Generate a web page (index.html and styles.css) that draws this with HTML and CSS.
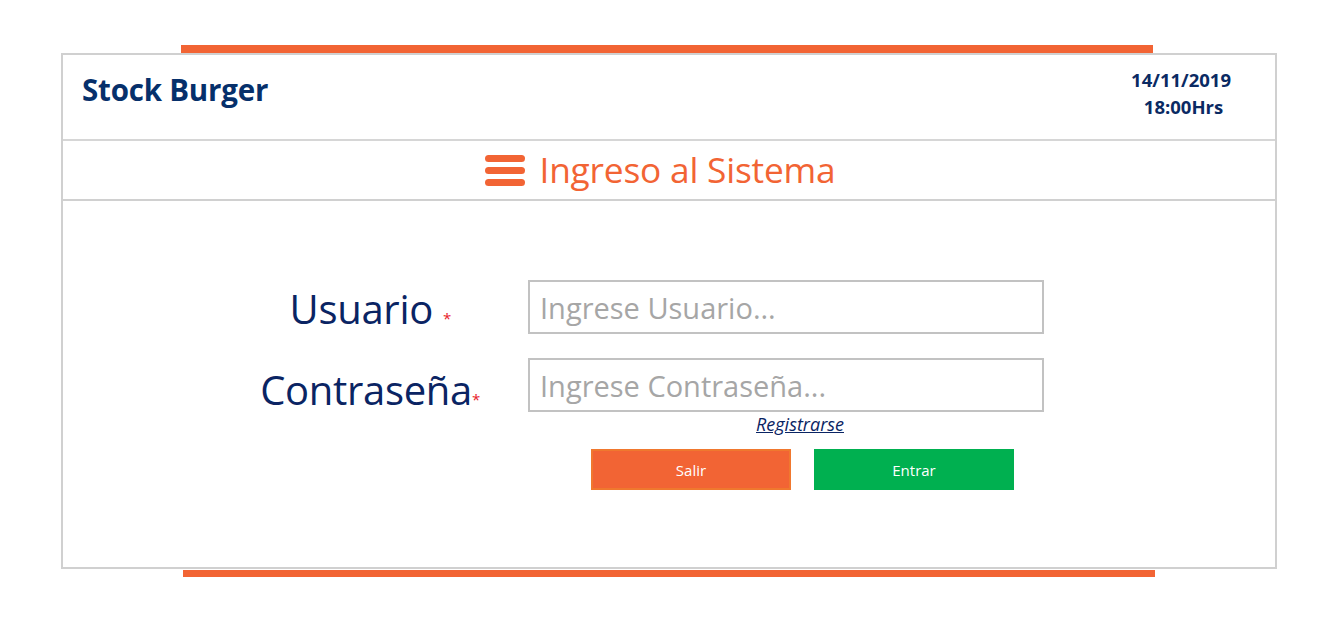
FILE: index.html
```html
<!DOCTYPE html>
<html lang="es">
<head>
<meta charset="utf-8">
<title>Stock Burger</title>
<link rel="stylesheet" href="styles.css">
</head>
<body>
<div class="page">
  <div class="bar bar-top"></div>
  <div class="card">
    <header class="header">
      <div class="brand">Stock Burger</div>
      <div class="datetime">
        <div class="date">14/11/2019</div>
        <div class="time">18:00Hrs</div>
      </div>
    </header>
    <div class="titlebar">
      <svg class="menu-icon" width="40" height="32" viewBox="0 0 40 32">
        <rect x="0" y="0" width="40" height="7" rx="3.5" fill="#f26434"/>
        <rect x="0" y="12" width="40" height="7" rx="3.5" fill="#f26434"/>
        <rect x="0" y="24" width="40" height="7" rx="3.5" fill="#f26434"/>
      </svg>
      <h1 class="title">Ingreso al Sistema</h1>
    </div>
    <main class="content">
      <form class="login">
        <div class="grid">
          <label class="label label-user" for="user">Usuario <span class="req">*</span></label>
          <input class="field" id="user" type="text" placeholder="Ingrese Usuario...">
          <label class="label label-pass" for="pass">Contraseña<span class="req">*</span></label>
          <input class="field" id="pass" type="password" placeholder="Ingrese Contraseña...">
        </div>
        <div class="below">
          <div class="register"><a href="#">Registrarse</a></div>
          <div class="actions">
            <button type="button" class="btn btn-exit">Salir</button>
            <button type="submit" class="btn btn-enter">Entrar</button>
          </div>
        </div>
      </form>
    </main>
  </div>
  <div class="bar bar-bottom"></div>
</div>
</body>
</html>
```

FILE: styles.css
```css
* { box-sizing: border-box; }
html, body { margin: 0; padding: 0; background: #fff; }
body { font-family: "Open Sans", "Noto Sans", sans-serif; color: #0a2a63; }

.page { padding: 45px 0 0 61px; }

.bar { height: 8px; width: 972px; background: #f26434; }
.bar-top { margin-left: 120px; }
.bar-bottom { margin-left: 122px; margin-top: 1px; height: 7px; }

.card {
  width: 1216px;
  height: 516px;
  border: 2px solid #d0d0d0;
  display: flex;
  flex-direction: column;
}

.header {
  height: 86px;
  border-bottom: 2px solid #d6d6d6;
  display: flex;
  justify-content: space-between;
  align-items: flex-start;
  padding: 14px 44px 0 19px;
}
.brand { font-size: 29.5px; font-weight: 700; color: #06306b; letter-spacing: -0.2px; line-height: 42px; }
.datetime { text-align: center; font-weight: 700; font-size: 18.5px; line-height: 27px; color: #0a2a63; margin-top: -3px; }
.time { padding-left: 5px; }

.titlebar {
  height: 60px;
  border-bottom: 2px solid #d0d0d0;
  display: flex;
  align-items: center;
  justify-content: center;
  gap: 14px;
  padding-right: 19px;
}
.menu-icon { display: block; margin-top: 1px; margin-left: 2px; }
.title { margin: 0 0 2px; font-weight: 400; font-size: 35.3px; color: #f26434; letter-spacing: -0.2px; line-height: 44px; }

.content { flex: 1; padding-top: 79px; }

.grid {
  display: grid;
  grid-template-columns: 465px 516px;
  row-gap: 24px;
  align-items: center;
}
.label {
  font-size: 40px;
  line-height: 1;
  color: #0a2463;
  text-align: right;
  letter-spacing: -0.3px;
}
.label-user { padding-right: 77px; padding-top: 4px; }
.label-pass { padding-right: 48px; padding-top: 9px; }
.req { color: #e8202a; font-size: 15px; }

.field {
  height: 54px;
  width: 516px;
  border: 2px solid #c2c2c2;
  padding: 0 10px;
  font-family: inherit;
  font-size: 29px;
  color: #333;
  outline: none;
}
.field::placeholder { color: #a6a6a6; }

.below { margin-left: 465px; width: 516px; }
.register { text-align: center; padding-left: 28px; padding-top: 2px; height: 22px; line-height: 20px; }
.register a { font-size: 18px; font-style: italic; color: #0a2463; text-decoration: underline; }

.actions {
  margin-top: 15px;
  display: flex;
  gap: 23px;
  padding-left: 63px;
}
.btn {
  width: 200px;
  height: 41px;
  border: 0;
  font-family: inherit;
  font-size: 15px;
  color: #fff;
}
.btn-exit { background: #f26434; border: 2px solid #f0782e; }
.btn-enter { background: #00b050; }
```
